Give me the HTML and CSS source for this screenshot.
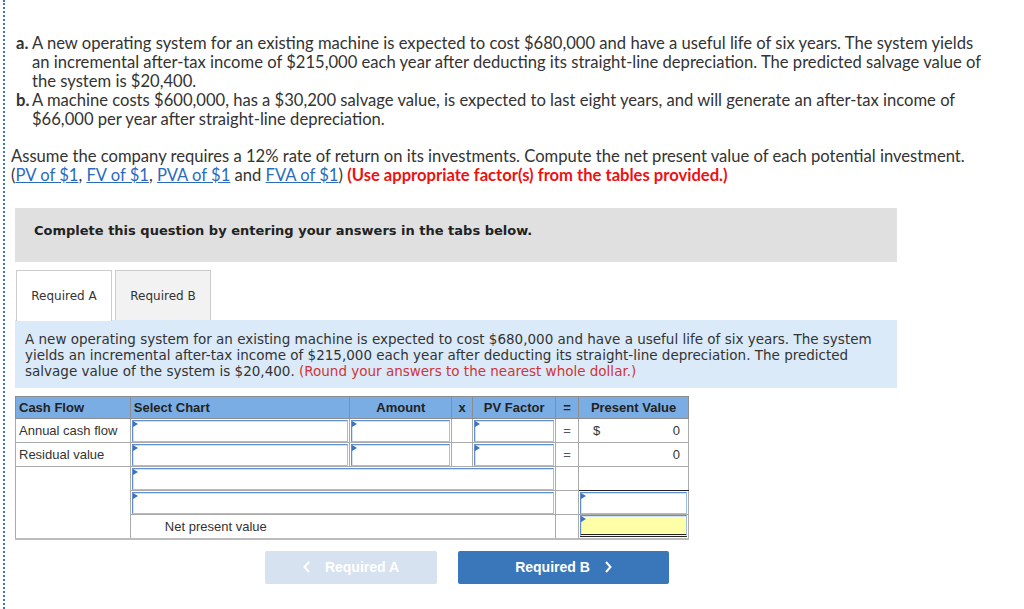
FILE: index.html
```html
<html lang="en">
<head>
    <meta charset="utf-8"/>
    <title>NPV question</title>
    <link rel="stylesheet" href="styles.css">
</head>
<body>
<div class="page">
    <div class="question">
        <div class="parts">
            <div class="part">
                <span class="part-label">a.</span>
                <span>A new operating system for an existing machine is expected to cost $680,000 and have a useful life of six years. The system yields an incremental after-tax income of $215,000 each year after deducting its straight-line depreciation. The predicted salvage value of the system is $20,400.</span>
            </div>
            <div class="part">
                <span class="part-label">b.</span>
                <span>A machine costs $600,000, has a $30,200 salvage value, is expected to last eight years, and will generate an after-tax income of $66,000 per year after straight-line depreciation.</span>
            </div>
        </div>

        <p class="assume">
            Assume the company requires a 12% rate of return on its investments. Compute the net present value of each potential investment.<br/>
            (<a href="#">PV of $1</a>, <a href="#">FV of $1</a>, <a href="#">PVA of $1</a> and <a href="#">FVA of $1</a>) <span class="warn">(Use appropriate factor(s) from the tables provided.)</span>
        </p>
    </div>

    <div class="answer">
        <div class="instructions">Complete this question by entering your answers in the tabs below.</div>

        <div class="tabs">
            <div class="tab active">Required A</div>
            <div class="tab">Required B</div>
        </div>

        <div class="tab-info">
            A new operating system for an existing machine is expected to cost $680,000 and have a useful life of six years. The system yields an incremental after-tax income of $215,000 each year after deducting its straight-line depreciation. The predicted salvage value of the system is $20,400. <span class="round">(Round your answers to the nearest whole dollar.)</span>
        </div>

        <table class="npv">
            <colgroup>
                <col class="c-flow"/>
                <col class="c-chart"/>
                <col class="c-amount"/>
                <col class="c-x"/>
                <col class="c-factor"/>
                <col class="c-eq"/>
                <col class="c-pv"/>
            </colgroup>
            <tr>
                <th class="left">Cash Flow</th>
                <th class="left">Select Chart</th>
                <th>Amount</th>
                <th>x</th>
                <th>PV Factor</th>
                <th>=</th>
                <th>Present Value</th>
            </tr>
            <tr>
                <td>Annual cash flow</td>
                <td class="in"><div class="field"></div></td>
                <td class="in"><div class="field"></div></td>
                <td></td>
                <td class="in"><div class="field"></div></td>
                <td class="eq">=</td>
                <td class="value"><span>$</span><span class="num">0</span></td>
            </tr>
            <tr>
                <td>Residual value</td>
                <td class="in"><div class="field"></div></td>
                <td class="in"><div class="field"></div></td>
                <td></td>
                <td class="in"><div class="field"></div></td>
                <td class="eq">=</td>
                <td class="value"><span></span><span class="num">0</span></td>
            </tr>
            <tr>
                <td rowspan="3"></td>
                <td class="in" colspan="4"><div class="field"></div></td>
                <td></td>
                <td class="total"></td>
            </tr>
            <tr>
                <td class="in" colspan="4"><div class="field"></div></td>
                <td></td>
                <td class="in"><div class="field"></div></td>
            </tr>
            <tr>
                <td class="npv-label" colspan="4">Net present value</td>
                <td></td>
                <td class="in"><div class="field yellow"></div></td>
            </tr>
        </table>

        <div class="nav">
            <button class="nav-btn prev">
                <svg width="8" height="12" viewBox="0 0 8 12"><path d="M6 1 L1.5 6 L6 11" fill="none" stroke="#fff" stroke-width="2"/></svg>
                Required A
            </button>
            <button class="nav-btn next">
                Required B
                <svg width="8" height="12" viewBox="0 0 8 12"><path d="M2 1 L6.5 6 L2 11" fill="none" stroke="#fff" stroke-width="2"/></svg>
            </button>
        </div>
    </div>
</div>
</body>
</html>
```

FILE: styles.css
```css
body {
    margin: 0;
    background: #fff;
}

.page {
    margin-left: 3px;
    border-left: 2px dotted #3d74bf;
    min-height: 609px;
    padding-top: 34px;
    box-sizing: border-box;
}

.question {
    font-family: Lato, "Open Sans", sans-serif;
    font-size: 16.6px;
    line-height: 19px;
    color: #333;
}

.parts {
    padding-left: 11px;
    width: 974px;
}

.part {
    display: grid;
    grid-template-columns: 16px 1fr;
}

.part-label {
    font-weight: bold;
}

.assume {
    margin: 18px 0 0 6px;
}

.assume a {
    color: #2a6bbd;
}

.warn {
    color: #ee1111;
    font-weight: bold;
}

.answer {
    margin-left: 10px;
    width: 882px;
    padding-top: 23px;
}

.instructions {
    background: #e0e0e0;
    height: 54px;
    padding-left: 19px;
    box-sizing: border-box;
    line-height: 46px;
    font-family: "DejaVu Sans", Verdana, sans-serif;
    font-weight: bold;
    font-size: 13px;
    color: #222;
}

.tabs {
    display: flex;
    gap: 3px;
    margin-top: 8px;
    padding-left: 1px;
}

.tab {
    width: 96px;
    height: 50px;
    box-sizing: border-box;
    border: 1px solid #ccc;
    border-bottom: none;
    background: #f2f2f2;
    font-family: "DejaVu Sans", Verdana, sans-serif;
    font-size: 12px;
    line-height: 50px;
    text-align: center;
    color: #333;
}

.tab.active {
    background: #fff;
    height: 51px;
    margin-bottom: -1px;
}

.tab-info {
    background: #dbeaf8;
    padding: 11px 20px 9px 10px;
    font-family: "DejaVu Sans", Verdana, sans-serif;
    font-size: 13.5px;
    line-height: 16px;
    color: #333;
}

.round {
    color: #cf3437;
}

.npv {
    margin-top: 8px;
    border-collapse: collapse;
    width: 674px;
    font-family: "Liberation Sans", Arial, sans-serif;
    font-size: 13px;
    color: #333;
    border-bottom: 2px solid #bbb;
}

.c-flow { width: 115px; }
.c-chart { width: 220px; }
.c-amount { width: 102px; }
.c-x { width: 21px; }
.c-factor { width: 83px; }
.c-eq { width: 23px; }
.c-pv { width: 110px; }

.npv th {
    background: #7aade3;
    border: 1px solid #8d8d8d;
    height: 22px;
    padding: 0 3px;
    font-weight: bold;
    color: #222;
    text-align: center;
}

.npv th.left {
    text-align: left;
}

.npv td {
    border: 1px solid #aaa;
    height: 24px;
    padding: 0 3px;
}

.npv td.in {
    padding: 0 1px;
}

.npv td.eq {
    text-align: center;
    color: #555;
}

.npv td.value {
    padding: 0 8px 0 14px;
}

.num {
    float: right;
}

.npv td.total {
    border-bottom: 1px solid #222;
}

.npv td.npv-label {
    padding-left: 34px;
}

.field {
    position: relative;
    height: 22px;
    box-sizing: border-box;
    border: 1px solid #5f8fd0;
    border-bottom-color: #9fbfe8;
    border-right-color: #9fbfe8;
    box-shadow: inset 1px 1px 0 #d3e3f6;
    background: #fff;
}

.field::before {
    content: "";
    position: absolute;
    left: 0;
    top: 0;
    border-left: 5px solid #3b73c0;
    border-top: 3px solid transparent;
    border-bottom: 3px solid transparent;
}

.field.yellow {
    background: #ffffa8;
    border-bottom: 3px double #222;
}

.nav {
    display: flex;
    gap: 21px;
    margin-top: 11px;
    padding-left: 250px;
}

.nav-btn {
    display: flex;
    align-items: center;
    justify-content: center;
    gap: 14px;
    height: 33px;
    border: none;
    border-radius: 2px;
    font-family: "Liberation Sans", Arial, sans-serif;
    font-weight: bold;
    font-size: 14px;
    color: #fff;
}

.nav-btn.prev {
    width: 172px;
    background: #d6e2f0;
}

.nav-btn.next {
    width: 211px;
    background: #3a76ba;
}
```
